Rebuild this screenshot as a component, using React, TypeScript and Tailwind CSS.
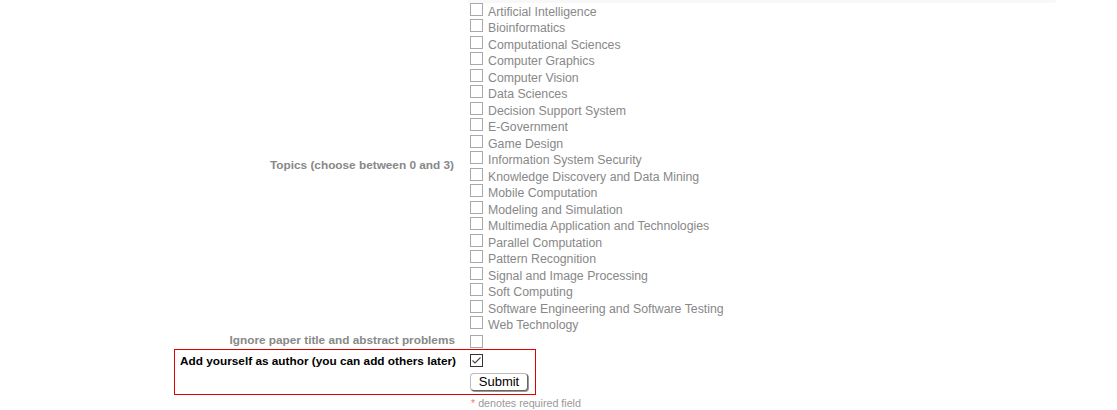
const topics = [
  'Artificial Intelligence',
  'Bioinformatics',
  'Computational Sciences',
  'Computer Graphics',
  'Computer Vision',
  'Data Sciences',
  'Decision Support System',
  'E-Government',
  'Game Design',
  'Information System Security',
  'Knowledge Discovery and Data Mining',
  'Mobile Computation',
  'Modeling and Simulation',
  'Multimedia Application and Technologies',
  'Parallel Computation',
  'Pattern Recognition',
  'Signal and Image Processing',
  'Soft Computing',
  'Software Engineering and Software Testing',
  'Web Technology',
]

function Box({ checked = false }: { checked?: boolean }) {
  return (
    <span
      className={
        checked
          ? 'flex h-[13px] w-[13px] shrink-0 items-center justify-center border border-[#333] bg-white'
          : 'block h-[13px] w-[13px] shrink-0 border border-[#a9a9a9] bg-white'
      }
    >
      {checked && (
        <svg width="11" height="11" viewBox="0 0 11 11">
          <path d="M1.5 5.5 L4 8 L9.5 2.5" fill="none" stroke="#444" strokeWidth="1.1" />
        </svg>
      )}
    </span>
  )
}

export default function App() {
  return (
    <div className="relative h-[410px] w-[1117px] bg-white font-['Liberation_Sans',Arial,sans-serif] text-[12px]">
      {/* faint panel edge at the top */}
      <div className="absolute left-[468px] top-0 h-[3px] w-[588px] rounded-br-[6px] bg-[#f8f8f8]" />

      <div className="relative flex flex-col pl-[174px] pt-[1px]">
        {/* Topics */}
        <div className="flex">
          <div className="flex w-[286px] items-center justify-end pr-[6px] text-[11.8px] font-bold text-[#888]">
            Topics (choose between 0 and 3)
          </div>
          <div className="flex flex-col">
            {topics.map((t) => (
              <label key={t} className="flex h-[16.5px] items-center pl-[10px] text-[12.3px] text-[#888]">
                <Box />
                <span className="ml-[5px] mt-[5px] whitespace-nowrap">{t}</span>
              </label>
            ))}
          </div>
        </div>

        {/* Ignore problems */}
        <div className="flex h-[18px] items-center">
          <div className="mt-[2px] w-[286px] pr-[5px] text-right text-[11.8px] font-bold text-[#888]">
            Ignore paper title and abstract problems
          </div>
          <div className="pl-[10px] pt-[3px]">
            <Box />
          </div>
        </div>

        {/* Author row */}
        <div className="flex h-[46px] w-[362px] border border-[#e00000]">
          <div className="flex h-[24px] w-[285px] items-center justify-end whitespace-nowrap pr-[4px] text-[11.8px] font-bold text-black">
            Add yourself as author (you can add others later)
          </div>
          <div className="flex flex-col pl-[10px] pt-[4px]">
            <Box checked />
            <button className="mt-[6px] flex h-[18px] w-[58px] items-center justify-center rounded-[4px] border border-[#bbb] border-b-[#666] border-r-[#666] bg-white pb-[1px] text-[13px] leading-none text-black shadow-[1px_1px_0_#999]">
              Submit
            </button>
          </div>
        </div>

        <div className="ml-[297px] mt-[0px] text-[10.7px] text-[#999]">
          <span className="text-[#f77]">*</span> denotes required field
        </div>
      </div>
    </div>
  )
}
